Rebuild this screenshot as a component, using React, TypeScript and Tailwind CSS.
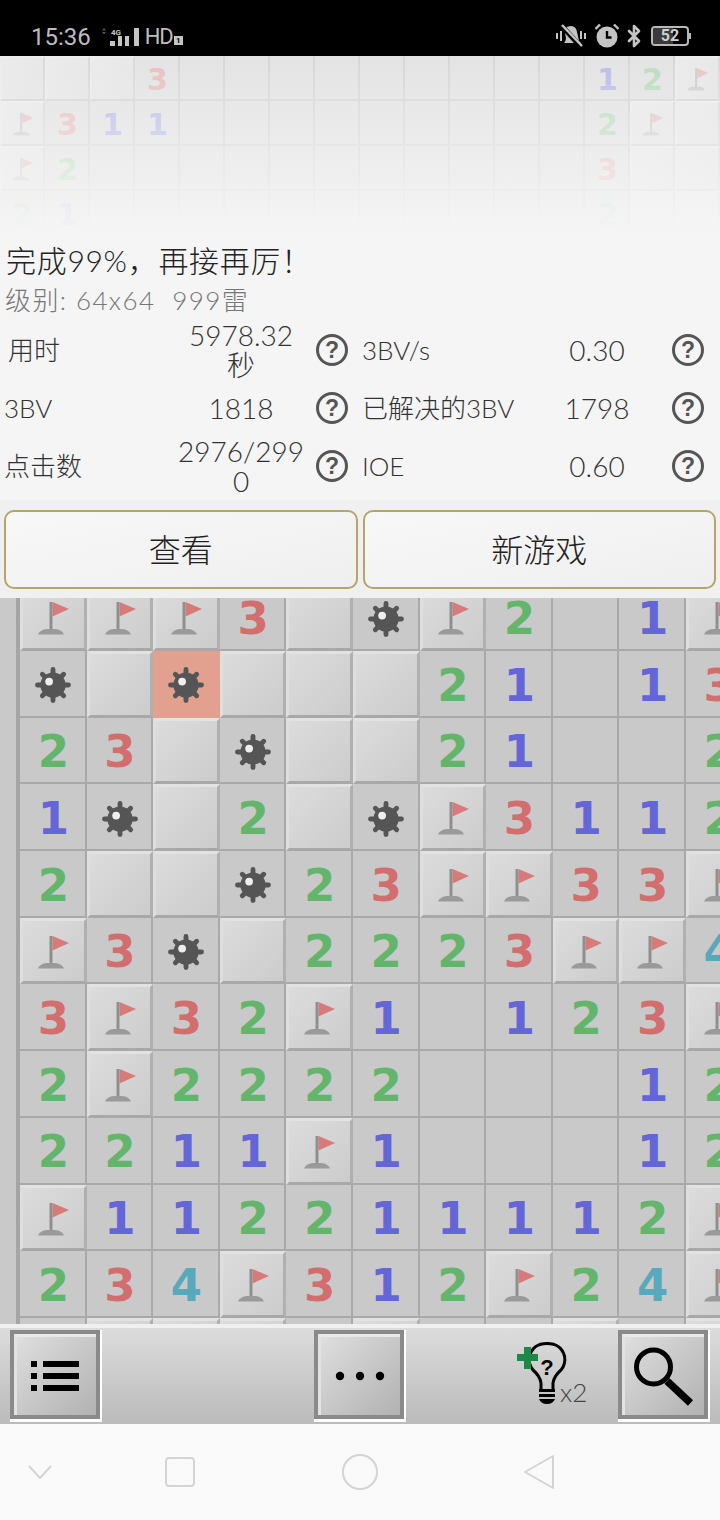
import React from 'react';
import { Bluetooth } from 'lucide-react';

// F flag, B raised blank, M mine, R exploded mine, _ open blank, digits are open numbers
const boardRows = [
  'FFF3BMF2_1F',
  'MBRBBB21_13',
  '23BMBB21__2',
  '1MB2BMF3112',
  '2BBM23FF33F',
  'F3MB2223FF4',
  '3F32F1_123F',
  '2F2222___12',
  '2211F1___12',
  'F112211112F',
  '234F312F24F',
  '_BBB_B__B_B',
];

const topRows = [
  'BBB3_________12F',
  'F311_________2FB',
  'F2___________3BB',
  '21___________2BB',
];

const digitColors: Record<string, string> = {
  '1': 'text-[#6465d6]',
  '2': 'text-[#63b56c]',
  '3': 'text-[#d36e6e]',
  '4': 'text-[#58a9bc]',
};

const handwriting = "font-['Lato','Noto_Sans_CJK_SC',sans-serif] font-light";

const Flag = ({ small }: { small?: boolean }) => (
  <svg
    viewBox="0 0 66 66"
    className={small ? '-m-[2px] w-[45px] h-[45px] max-w-none' : '-m-[3px] w-[66px] h-[66px] max-w-none'}
  >
    <rect x="29.5" y="18" width="3" height="28" fill="#8f8f8f" />
    <polygon points="32.5,18 49,25 32.5,32.5" fill="#d67a7a" />
    <path d="M18 50.5 Q20 45.5 27 45 h8 q7 .5 9 5.5z" fill="#9a9a9a" />
  </svg>
);

const Mine = () => (
  <svg viewBox="0 0 66 66" className="w-[64px] h-[64px] shrink-0">
    <g stroke="#555" strokeWidth="5" strokeLinecap="round">
      <line x1="33" y1="17" x2="33" y2="49" />
      <line x1="17" y1="33" x2="49" y2="33" />
      <line x1="22" y1="22" x2="44" y2="44" />
      <line x1="44" y1="22" x2="22" y2="44" />
    </g>
    <circle cx="33" cy="33" r="13" fill="#555" />
    <circle cx="29" cy="29.5" r="4" fill="#eee" />
  </svg>
);

const Cell = ({ kind, small }: { kind: string; small?: boolean }) => {
  if (kind === 'R') {
    return (
      <div className="bg-[#e2a08f] flex items-center justify-center pt-[2px]">
        <Mine />
      </div>
    );
  }
  if (kind === 'B' || kind === 'F') {
    return (
      <div
        className={`bg-linear-to-br from-[#dcdcdc] to-[#cccccc] border-t-[#e2e2e2] border-l-[#dedede] border-b-[#a8a8a8] border-r-[#b0b0b0] ${
          small ? 'border-2' : 'border-[3px]'
        }`}
      >
        {kind === 'F' && <Flag small={small} />}
      </div>
    );
  }
  return (
    <div
      className={`bg-[#c9c9c9] border-r-2 border-b-2 border-[#a9a9a9] flex items-center justify-center font-['DejaVu_Sans',sans-serif] font-bold ${
        small ? 'text-[30px] pt-[3px] pl-[2px]' : 'text-[45px] pt-[4px] pl-[2px]'
      } ${digitColors[kind] ?? ''}`}
    >
      {kind === 'M' ? <Mine /> : kind === '_' ? '' : kind}
    </div>
  );
};

const StatusBar = () => (
  <div className="h-14 bg-black flex items-center pl-[31px] pr-[29px] pt-[17px] text-[#bdbdbd] font-['Roboto',sans-serif]">
    <span className="text-[24px] leading-none">15:36</span>
    <svg width="29" height="18" viewBox="0 0 29 18" fill="#c4c4c4" className="ml-[19px] overflow-visible">
      <path d="M-8 2.5 L-6 0 L-4 2.5z M-8 4 L-6 6.5 L-4 4z" fill="#555" />
      <text x="1" y="6.5" fontSize="8" fontWeight="700" fontFamily="Roboto">4G</text>
      <rect x="0" y="13" width="5" height="5" />
      <rect x="8" y="8" width="4" height="10" />
      <rect x="15" y="8" width="4" height="10" />
      <rect x="24" y="0" width="5" height="18" />
    </svg>
    <span className="ml-[6px] text-[22px] leading-none tracking-tighter">HD</span>
    <span className="ml-[1px] mt-[8px] w-[9px] h-[9px] bg-[#c4c4c4] text-black text-[8px] leading-[9px] font-bold text-center">1</span>
    <div className="ml-auto flex items-center -mt-[1px]">
      <svg width="30" height="26" viewBox="0 0 30 26" fill="#c4c4c4">
        <path d="M8 6 Q11 3 15 3 Q20 3 21 9 L23 18 L25 20 H8 Q10 18 10 15z" />
        <rect x="0" y="10" width="2" height="6" />
        <rect x="4" y="8" width="2" height="10" />
        <rect x="24" y="8" width="2" height="8" />
        <rect x="28" y="10" width="2" height="6" />
        <path d="M5 2 L25 24" stroke="#000" strokeWidth="5" />
        <path d="M6 2 L26 23" stroke="#c4c4c4" strokeWidth="2.5" />
      </svg>
      <svg width="26" height="26" viewBox="0 0 26 26" className="ml-[9px]" fill="#c4c4c4">
        <circle cx="12" cy="14" r="10.5" />
        <path d="M12 8 V14.5 H16.5" stroke="#000" strokeWidth="2.4" fill="none" />
        <path d="M0.5 6 L5 1.5 M23.5 6 L19 1.5" stroke="#c4c4c4" strokeWidth="2.4" />
      </svg>
      <Bluetooth size={24} strokeWidth={2.6} className="ml-[1px] text-[#c4c4c4]" />
      <div className="ml-[5px] relative w-[38px] h-[20px] border-2 border-[#b8b8b8] rounded-[4px] overflow-hidden flex items-center justify-center">
        <div className="absolute left-0 top-0 bottom-0 w-[20px] bg-[#3a3a3a]" />
        <span className="relative text-[16px] leading-none font-bold text-[#cfcfcf]">52</span>
      </div>
      <div className="w-[2px] h-[6px] bg-[#b8b8b8]" />
    </div>
  </div>
);

const HelpIcon = () => (
  <div className="w-8 h-8 shrink-0 rounded-full border-[3.5px] border-[#555] flex items-center justify-center text-[#555] text-[23px] leading-none font-bold font-['Liberation_Sans',sans-serif]">
    ?
  </div>
);

const Stat = ({ label, value, labelWidth }: { label: string; value: string; labelWidth: string }) => (
  <div className="flex items-center h-[58px]">
    <span className={`${labelWidth} shrink-0 whitespace-nowrap text-[26px] text-[#333]`}>{label}</span>
    <span className="w-[126px] shrink-0 text-center break-all text-[28px] leading-[30px] text-[#333]">{value}</span>
    <div className="ml-[12px]">
      <HelpIcon />
    </div>
  </div>
);

const ResultDialog = () => (
  <div className={`bg-[#f5f5f5] ${handwriting}`}>
    <div className="h-[265px] pt-[6px]">
      <p className="pl-[6px] text-[30px] leading-[38px] tracking-[0.7px] text-[#222] whitespace-nowrap">完成99%，再接再厉！</p>
      <p className="pl-[5px] mt-[2px] text-[26px] leading-[38px] tracking-[1.4px] text-[#777] whitespace-pre">级别: 64x64  999雷</p>
      <div className="mt-[2px] grid grid-cols-[356px_1fr]">
        <Stat label="用时" value="5978.32 秒" labelWidth="w-[178px] pl-[8px]" />
        <div className="pl-[6px]">
          <Stat label="3BV/s" value="0.30" labelWidth="w-[172px]" />
        </div>
        <Stat label="3BV" value="1818" labelWidth="w-[178px] pl-[4px]" />
        <div className="pl-[6px]">
          <Stat label="已解决的3BV" value="1798" labelWidth="w-[172px]" />
        </div>
        <Stat label="点击数" value="2976/2990" labelWidth="w-[178px] pl-[4px]" />
        <div className="pl-[6px]">
          <Stat label="IOE" value="0.60" labelWidth="w-[172px]" />
        </div>
      </div>
    </div>
    <div className="h-[98px] bg-[#f0f0f0] px-[4px] pt-[10px] flex gap-[5px]">
      {['查看', '新游戏'].map((label) => (
        <button
          key={label}
          className="flex-1 h-[79px] rounded-[10px] border-2 border-[#b5a46c] bg-linear-to-br from-[#f8f8f8] to-[#efefef] text-[32px] text-[#222]"
        >
          {label}
        </button>
      ))}
    </div>
  </div>
);

const ToolButton = ({ children }: { children: React.ReactNode }) => (
  <div className="w-[92px] h-[92px] shrink-0 border-r-2 border-b-[3px] border-white">
    <div className="w-full h-full border-4 border-[#8a8a8a]">
      <div className="w-full h-full border-t-[3px] border-l-[3px] border-t-[#e8e8e8] border-l-[#e2e2e2] bg-linear-to-br from-[#dedede] to-[#b2b2b2] flex items-center justify-center">
        {children}
      </div>
    </div>
  </div>
);

const Toolbar = () => (
  <div className="border-t-4 border-[#f0f0f0]">
    <div className="h-[96px] pt-[2px] px-[10px] flex bg-linear-to-b from-[#dcdcdc] to-[#bbbbbb]">
      <ToolButton>
        <svg width="50" height="32" viewBox="0 0 50 32" fill="#000" className="-ml-[2px]">
          <rect x="0" y="1" width="6" height="6" />
          <rect x="12" y="1" width="36" height="6" />
          <rect x="0" y="13" width="6" height="6" />
          <rect x="12" y="13" width="36" height="6" />
          <rect x="0" y="25" width="6" height="6" />
          <rect x="12" y="25" width="36" height="6" />
        </svg>
      </ToolButton>
      <div className="w-[212px] shrink-0" />
      <ToolButton>
        <svg width="50" height="10" viewBox="0 0 50 10" fill="#000" className="-ml-[2px]">
          <circle cx="5" cy="5" r="4.2" />
          <circle cx="25" cy="5" r="4.2" />
          <circle cx="45" cy="5" r="4.2" />
        </svg>
      </ToolButton>
      <svg width="75" height="64" viewBox="0 0 75 64" className="ml-[110px] mt-[12px] shrink-0">
        <path
          d="M25 47 V41 Q24 34 17 28 Q12 22 13.5 14 Q17 1.5 31 1.5 Q45 1.5 48.5 14 Q50 22 45 28 Q38 34 37 41 V47"
          fill="none"
          stroke="#000"
          strokeWidth="3"
        />
        <rect x="23" y="47" width="16" height="3" fill="#000" />
        <rect x="23" y="52" width="16" height="3" fill="#000" />
        <path d="M23 57 H39 Q37 62 31 62 Q25 62 23 57z" fill="#000" />
        <text x="31" y="33" textAnchor="middle" fontSize="22" fontWeight="700" fontFamily="Liberation Sans" fill="#000">?</text>
        <path d="M8 5 H15 V12 H22 V19 H15 V27 H8 V19 H1 V12 H8z" fill="#1c8a45" />
        <text x="44" y="60" fontSize="26" fontFamily="Lato" fontWeight="300" fill="#444">x2</text>
      </svg>
      <div className="ml-auto">
        <ToolButton>
          <svg width="64" height="72" viewBox="0 0 64 72">
            <circle cx="20.5" cy="27" r="17" fill="none" stroke="#000" strokeWidth="5" />
            <path d="M34 41 L57.5 63" stroke="#000" strokeWidth="7.5" />
          </svg>
        </ToolButton>
      </div>
    </div>
  </div>
);

const NavBar = () => (
  <div className="h-24 bg-[#fafafa] flex items-center pl-[28px]">
    <svg width="24" height="14" viewBox="0 0 24 14" fill="none" stroke="#d4d4d4" strokeWidth="2">
      <path d="M1 1 L12 13 L23 1" />
    </svg>
    <div className="ml-[113px] w-[30px] h-[30px] rounded-[4px] border-2 border-[#d4d4d4]" />
    <div className="ml-[147px] w-9 h-9 rounded-full border-2 border-[#d4d4d4]" />
    <svg width="32" height="36" viewBox="0 0 32 36" fill="none" stroke="#d4d4d4" strokeWidth="2" strokeLinejoin="round" className="ml-[145px]">
      <path d="M30 2 V34 L2 18z" />
    </svg>
  </div>
);

const App: React.FC = () => {
  return (
    <div className="w-[720px] h-[1520px] overflow-hidden flex flex-col bg-[#f5f5f5]">
      <StatusBar />

      {/* board behind the dialog, faded out */}
      <div className="relative h-[179px] overflow-hidden">
        <div className="grid grid-cols-[repeat(16,45px)] auto-rows-[45px]">
          {topRows.flatMap((row, r) =>
            row.split('').map((kind, c) => <Cell key={`${r}-${c}`} kind={kind} small />)
          )}
        </div>
        <div className="absolute inset-0 bg-linear-to-b from-[#f5f5f599] to-[#f5f5f5]" />
      </div>

      <ResultDialog />

      <div className="h-[726px] overflow-hidden flex bg-[#c9c9c9]">
        <div className="w-5 shrink-0 pl-4">
          <div className="h-full bg-[#a5a5a5]" />
        </div>
        <div className="-mt-[13.7px] grid grid-cols-[repeat(11,66.6px)] auto-rows-[66.7px]">
          {boardRows.flatMap((row, r) =>
            row.split('').map((kind, c) => <Cell key={`${r}-${c}`} kind={kind} />)
          )}
        </div>
      </div>

      <Toolbar />
      <NavBar />
    </div>
  );
};

export default App;
